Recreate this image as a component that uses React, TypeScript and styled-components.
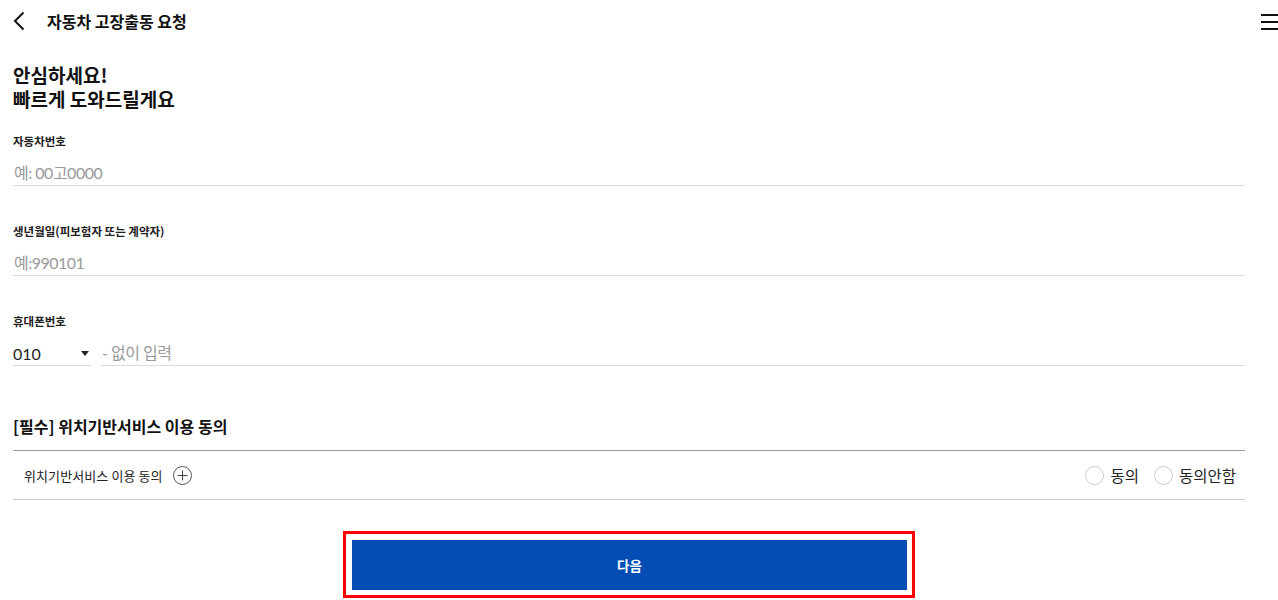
import React from "react";
import styled, { createGlobalStyle } from "styled-components";

const GlobalStyle = createGlobalStyle`
  html, body {
    margin: 0;
    padding: 0;
    background: #fff;
  }
  body {
    font-family: "Noto Sans CJK KR", "Noto Sans", sans-serif;
    color: #111;
  }
  * {
    box-sizing: border-box;
  }
`;

const Page = styled.div`
  width: 1278px;
  min-height: 600px;
  background: #fff;
`;

const Header = styled.header`
  height: 42px;
  display: flex;
  align-items: center;
  padding-left: 13px;
`;

const BackButton = styled.button`
  width: 12px;
  height: 20px;
  border: 0;
  padding: 0;
  background: none;
  display: flex;
  align-items: center;
  cursor: pointer;
`;

const Title = styled.h1`
  margin: 0 0 0 22px;
  font-size: 16px;
  font-weight: 700;
  color: #111;
  flex: 1;
`;

const MenuButton = styled.button`
  width: 17px;
  height: 16px;
  border: 0;
  padding: 0;
  background: none;
  display: flex;
  flex-direction: column;
  justify-content: space-between;
  cursor: pointer;
  margin-top: 2px;

  span {
    display: block;
    height: 2px;
    background: #111;
  }
`;

const Content = styled.main`
  padding: 21px 33px 0 13px;
`;

const Heading = styled.h2`
  margin: 0 0 22px;
  font-size: 19px;
  line-height: 24px;
  font-weight: 700;
  color: #111;
`;

const HeadingLine = styled.span`
  display: block;
`;

const Field = styled.div`
  margin-bottom: 37px;
`;

const Label = styled.label`
  display: block;
  font-size: 11.5px;
  line-height: 16px;
  font-weight: 700;
  color: #222;
  margin-bottom: 12px;
`;

const TextInput = styled.input`
  display: block;
  flex: 1;
  width: 100%;
  min-width: 0;
  height: 25px;
  border: 0;
  border-bottom: 1px solid #ddd;
  padding: 0 0 1px 1px;
  font-family: Lato, "Noto Sans CJK KR", sans-serif;
  font-size: 16px;
  letter-spacing: -0.5px;
  color: #222;
  outline: none;
  background: transparent;

  &::placeholder {
    color: #999;
  }
`;

const PhoneRow = styled.div`
  display: flex;
  gap: 10px;
`;

const SelectBox = styled.div`
  flex-shrink: 0;
  width: 78px;
  height: 25px;
  border-bottom: 1px solid #ddd;
  display: flex;
  align-items: center;
  justify-content: space-between;
  padding-right: 2px;
  font-family: Lato, "Noto Sans CJK KR", sans-serif;
  font-size: 16px;
  color: #222;
`;

const Caret = styled.span`
  width: 0;
  height: 0;
  border-left: 4px solid transparent;
  border-right: 4px solid transparent;
  border-top: 5px solid #222;
`;

const SectionTitle = styled.h3`
  margin: 49px 0 13px;
  font-size: 16px;
  line-height: 22px;
  font-weight: 700;
  color: #111;
`;

const AgreeRow = styled.div`
  height: 50px;
  border-top: 1px solid #999;
  border-bottom: 1px solid #ccc;
  display: flex;
  align-items: center;
  padding: 0 9px 0 11px;
`;

const AgreeText = styled.span`
  font-size: 13px;
  letter-spacing: 0.1px;
  color: #222;
`;

const PlusButton = styled.button`
  width: 19px;
  height: 19px;
  margin-left: 10px;
  border: 1px solid #555;
  border-radius: 50%;
  background: none;
  padding: 0;
  display: flex;
  align-items: center;
  justify-content: center;
  cursor: pointer;
`;

const Radios = styled.div`
  margin-left: auto;
  display: flex;
  align-items: center;
  gap: 15px;
`;

const RadioOption = styled.label`
  display: flex;
  align-items: center;
  gap: 6px;
  font-size: 15.5px;
  color: #222;
  cursor: pointer;
`;

const RadioCircle = styled.span`
  width: 19px;
  height: 19px;
  border: 1px solid #ccc;
  border-radius: 50%;
  background: #fff;
`;

const ButtonWrap = styled.div`
  display: flex;
  justify-content: center;
  margin-top: 31px;
`;

const Highlight = styled.div`
  border: 3px solid #ff0000;
  padding: 6px 5px 5px 6px;
`;

const NextButton = styled.button`
  width: 555px;
  height: 50px;
  border: 0;
  background: #034db4;
  color: #fff;
  font-family: "Noto Sans CJK KR", sans-serif;
  font-size: 13.5px;
  font-weight: 700;
  display: block;
  cursor: pointer;
`;

export default function App() {
  return (
    <Page>
      <GlobalStyle />
      <Header>
        <BackButton aria-label="뒤로">
          <svg width="12" height="20" viewBox="0 0 12 20">
            <path d="M10.5 1.5 L2 10 L10.5 18.5" fill="none" stroke="#111" strokeWidth="2" />
          </svg>
        </BackButton>
        <Title>자동차 고장출동 요청</Title>
        <MenuButton aria-label="메뉴">
          <span />
          <span />
          <span />
        </MenuButton>
      </Header>
      <Content>
        <Heading>
          <HeadingLine>안심하세요!</HeadingLine>
          <HeadingLine>빠르게 도와드릴게요</HeadingLine>
        </Heading>
        <Field>
          <Label>자동차번호</Label>
          <TextInput placeholder="예: 00고0000" />
        </Field>
        <Field>
          <Label>생년월일(피보험자 또는 계약자)</Label>
          <TextInput placeholder="예:990101" />
        </Field>
        <Field>
          <Label>휴대폰번호</Label>
          <PhoneRow>
            <SelectBox>
              010
              <Caret />
            </SelectBox>
            <TextInput placeholder="- 없이 입력" />
          </PhoneRow>
        </Field>
        <SectionTitle>[필수] 위치기반서비스 이용 동의</SectionTitle>
        <AgreeRow>
          <AgreeText>위치기반서비스 이용 동의</AgreeText>
          <PlusButton aria-label="자세히">
            <svg width="11" height="11" viewBox="0 0 11 11">
              <path d="M5.5 0.5 V10.5 M0.5 5.5 H10.5" stroke="#444" strokeWidth="1" />
            </svg>
          </PlusButton>
          <Radios>
            <RadioOption>
              <RadioCircle />
              동의
            </RadioOption>
            <RadioOption>
              <RadioCircle />
              동의안함
            </RadioOption>
          </Radios>
        </AgreeRow>
        <ButtonWrap>
          <Highlight>
            <NextButton>다음</NextButton>
          </Highlight>
        </ButtonWrap>
      </Content>
    </Page>
  );
}
